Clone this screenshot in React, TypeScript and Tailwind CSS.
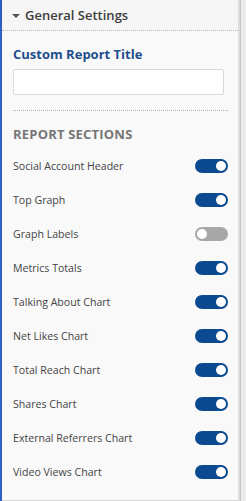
import React, { useState } from "react";

const SECTIONS: { label: string; on: boolean }[] = [
  { label: "Social Account Header", on: true },
  { label: "Top Graph", on: true },
  { label: "Graph Labels", on: false },
  { label: "Metrics Totals", on: true },
  { label: "Talking About Chart", on: true },
  { label: "Net Likes Chart", on: true },
  { label: "Total Reach Chart", on: true },
  { label: "Shares Chart", on: true },
  { label: "External Referrers Chart", on: true },
  { label: "Video Views Chart", on: true },
];

function Toggle({ on, onClick }: { on: boolean; onClick: () => void }) {
  return (
    <button
      type="button"
      onClick={onClick}
      className={`flex items-center w-[33px] h-[14px] rounded-full px-[2px] ${
        on ? "bg-[#0b4a8f] justify-end" : "bg-[#a8a8a8] justify-start"
      }`}
    >
      <span className="block w-[10px] h-[10px] rounded-full bg-white" />
    </button>
  );
}

export default function App() {
  const [items, setItems] = useState(SECTIONS);

  const flip = (i: number) =>
    setItems((prev) => prev.map((s, j) => (j === i ? { ...s, on: !s.on } : s)));

  return (
    <div
      className="w-[246px] h-[501px] flex bg-[#f0f0f0] overflow-hidden"
      style={{ fontFamily: '"Open Sans", "Noto Sans", sans-serif' }}
    >
      <div className="w-[2px] bg-[#2f5fc4]" />
      <div className="w-[236px] flex flex-col bg-[#f9f9f9] border-b border-[#d6d6d6]">
        {/* panel header */}
        <div className="h-[31px] flex items-center pl-[10px] gap-[5px] bg-[#f6f6f6] border-b border-dotted border-[#b9b9b9]">
          <svg width="8" height="6" viewBox="0 0 8 6" className="mt-[1px]">
            <path d="M0 1h8L4 5z" fill="#555" />
          </svg>
          <span className="text-[13px] font-semibold text-[#3d3d3d] leading-none">General Settings</span>
        </div>

        <div className="pl-[11px] pr-[10px]">
          <div className="pt-[17px] pb-[8px] text-[13px] font-bold text-[#1f4e8c] leading-none">
            Custom Report Title
          </div>
          <input
            type="text"
            className="block w-[211px] h-[26px] bg-white border border-[#d9d9d9] rounded-[2px] outline-none px-2 text-[12px]"
          />
          <div className="mt-[15px] w-[215px] border-t border-dotted border-[#b3b3b3]" />

          <div className="pt-[17px] pb-[8px] text-[13px] font-bold text-[#767676] tracking-[0.2px] leading-none">
            REPORT SECTIONS
          </div>

          <div className="flex flex-col">
            {items.map((s, i) => (
              <div key={s.label} className="h-[34px] flex items-center justify-between">
                <span className="text-[10.6px] text-[#444] leading-none">{s.label}</span>
                <Toggle on={s.on} onClick={() => flip(i)} />
              </div>
            ))}
          </div>
        </div>
      </div>
      <div className="w-[2px] bg-[#dcdcdc]" />
      <div className="flex-1 bg-[#ececec] border-l border-[#c8c8c8]" />
    </div>
  );
}
